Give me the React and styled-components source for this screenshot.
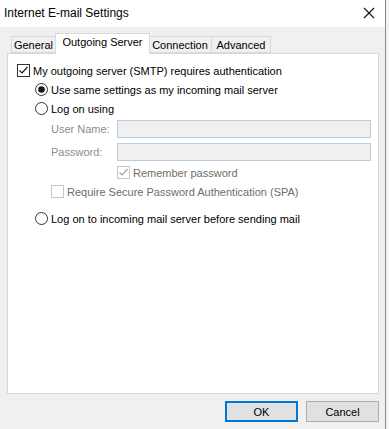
import React from "react";
import styled, { createGlobalStyle } from "styled-components";

const GlobalStyle = createGlobalStyle`
  html, body {
    margin: 0;
    padding: 0;
    background: #ffffff;
  }
  body {
    font-family: "Liberation Sans", Arial, sans-serif;
    font-size: 11px;
    color: #000;
  }
`;

const Page = styled.div`
  width: 389px;
  height: 429px;
  display: flex;
  background: #f3f3f3;
`;

const Window = styled.div`
  width: 385px;
  height: 429px;
  display: flex;
  flex-direction: column;
  background: #f0f0f0;
  border-right: 1px solid #8a8a8a;
`;

const TitleBar = styled.div`
  height: 27px;
  background: #fff;
  display: flex;
  align-items: center;
  justify-content: space-between;
  padding: 0 8px 0 4px;
`;

const Title = styled.span`
  font-size: 12px;
  margin-top: -1px;
`;

const CloseX = styled.svg`
  width: 12px;
  height: 12px;
  margin-right: 2px;
  margin-top: -1px;
`;

const Body = styled.div`
  flex: 1;
  display: flex;
  flex-direction: column;
  padding: 6px 6px 0 7px;
`;

const TabRow = styled.div`
  display: flex;
  align-items: flex-end;
  height: 20px;
  padding-left: 4px;
  position: relative;
  z-index: 1;
`;

const Tab = styled.div`
  height: ${(p) => (p.$active ? "21px" : "17px")};
  box-sizing: border-box;
  display: flex;
  align-items: center;
  justify-content: center;
  width: ${(p) => p.$w}px;
  margin: ${(p) => (p.$active ? "0 -1px -1px -1px" : "0")};
  background: ${(p) => (p.$active ? "#fff" : "#f0f0f0")};
  border: 1px solid #d9d9d9;
  border-bottom: ${(p) => (p.$active ? "none" : "1px solid #d9d9d9")};
  border-left: ${(p) => (p.$first || p.$active ? "1px solid #d9d9d9" : "none")};
  padding-bottom: ${(p) => (p.$active ? "4px" : "0")};
  position: relative;
  z-index: ${(p) => (p.$active ? 2 : 1)};
  white-space: nowrap;
`;

const Panel = styled.div`
  height: 341px;
  box-sizing: border-box;
  background: #fff;
  border: 1px solid #d9d9d9;
  padding: 7px 0 0 9px;
  display: flex;
  flex-direction: column;
`;

const Row = styled.label`
  display: flex;
  align-items: center;
  gap: 3px;
  height: 19px;
  margin-left: ${(p) => p.$indent || 0}px;
  margin-top: ${(p) => p.$mt || 0}px;
  color: ${(p) => (p.$disabled ? "#6d6d6d" : "#000")};
  white-space: nowrap;
`;

const FieldRow = styled.div`
  display: flex;
  align-items: center;
  height: 18px;
  margin-top: ${(p) => p.$mt || 0}px;
  margin-left: 34px;
`;

const FieldLabel = styled.span`
  width: 66px;
  color: #8c8c8c;
  white-space: nowrap;
`;

const Field = styled.div`
  width: 254px;
  height: 18px;
  box-sizing: border-box;
  background: #f0f0f0;
  border: 1px solid #b9cde0;
`;

const Footer = styled.div`
  display: flex;
  justify-content: flex-end;
  gap: 8px;
  padding: 7px 0 0 0;
`;

const Button = styled.button`
  width: 73px;
  height: 21px;
  box-sizing: border-box;
  font-family: inherit;
  font-size: 11px;
  color: #000;
  background: #e1e1e1;
  border: ${(p) => (p.$default ? "2px solid #0078d7" : "1px solid #adadad")};
  padding: 0;
`;

const Checkbox = ({ checked, disabled }) => {
  const c = disabled ? "#c6c6c6" : "#333";
  const m = disabled ? "#a5a5a5" : "#1a1a1a";
  return (
    <svg width="13" height="13" viewBox="0 0 13 13">
      <rect x="0.5" y="0.5" width="12" height="12" fill="#fff" stroke={c} />
      {checked && (
        <path d="M2.5 6.5 L5 9 L10.5 3" fill="none" stroke={m} strokeWidth="1.2" />
      )}
    </svg>
  );
};

const Radio = ({ checked }) => (
  <svg width="13" height="13" viewBox="0 0 13 13">
    <circle cx="6.5" cy="6.5" r="6" fill="#fff" stroke="#333" />
    {checked && <circle cx="6.5" cy="6.5" r="3.3" fill="#1a1a1a" />}
  </svg>
);

export default function App() {
  return (
    <>
      <GlobalStyle />
      <Page>
        <Window>
          <TitleBar>
            <Title>Internet E-mail Settings</Title>
            <CloseX viewBox="0 0 12 12">
              <path d="M1 1 L11 11 M11 1 L1 11" stroke="#111" strokeWidth="1.1" />
            </CloseX>
          </TitleBar>
          <Body>
            <TabRow>
              <Tab $first $w={45}>General</Tab>
              <Tab $active $w={95}>Outgoing Server</Tab>
              <Tab $w={63}>Connection</Tab>
              <Tab $w={59}>Advanced</Tab>
            </TabRow>
            <Panel>
              <Row>
                <Checkbox checked />
                My outgoing server (SMTP) requires authentication
              </Row>
              <Row $indent={18}>
                <Radio checked />
                Use same settings as my incoming mail server
              </Row>
              <Row $indent={18}>
                <Radio />
                Log on using
              </Row>
              <FieldRow $mt={2}>
                <FieldLabel>User Name:</FieldLabel>
                <Field />
              </FieldRow>
              <FieldRow $mt={5}>
                <FieldLabel>Password:</FieldLabel>
                <Field />
              </FieldRow>
              <Row $indent={100} $mt={2} $disabled>
                <Checkbox checked disabled />
                Remember password
              </Row>
              <Row $indent={34} $disabled>
                <Checkbox disabled />
                Require Secure Password Authentication (SPA)
              </Row>
              <Row $indent={18} $mt={8}>
                <Radio />
                Log on to incoming mail server before sending mail
              </Row>
            </Panel>
            <Footer>
              <Button $default>OK</Button>
              <Button>Cancel</Button>
            </Footer>
          </Body>
        </Window>
      </Page>
    </>
  );
}
